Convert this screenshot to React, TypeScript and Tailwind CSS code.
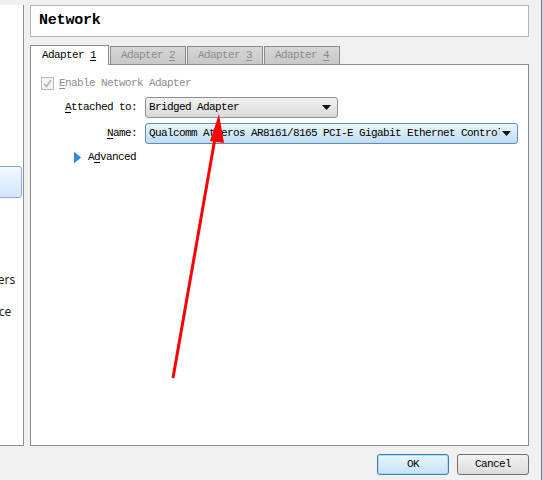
import React from "react";

const MONO = "font-['Liberation_Mono','DejaVu_Sans_Mono',monospace]";

const SIDE_ITEMS = ["General", "System", "Display", "Storage", "Audio", "Network", "Serial Ports", "USB", "Shared Folders", "User Interface"];

const TABS = ["1", "2", "3", "4"];

function Combo({ text, width, focus }: { text: string; width: string; focus?: boolean }) {
  return (
    <div
      className={`flex h-[21px] items-center rounded-[3px] border pl-[3px] pr-[6px] ${width} ${
        focus
          ? "border-[#5d8db5] bg-gradient-to-b from-[#eaf6fd] to-[#bcdcef]"
          : "border-[#8e8f8f] bg-gradient-to-b from-[#f2f2f2] to-[#d9d9d9]"
      }`}
    >
      <span className="flex-1 overflow-hidden whitespace-nowrap text-[11px] tracking-[-0.6px] text-black">{text}</span>
      <svg width="9" height="5" viewBox="0 0 9 5" className="ml-[2px] shrink-0">
        <path d="M0 0h9L4.5 5z" fill="#111" />
      </svg>
    </div>
  );
}

export default function App() {
  return (
    <div className={`relative flex h-[480px] w-[543px] overflow-hidden bg-[#f0f0f0] ${MONO}`}>
      {/* settings list, mostly scrolled off the left edge */}
      <div className="mt-[5px] h-[441px] w-[24px] shrink-0 overflow-hidden border-b border-r border-[#8e8f93] bg-white pt-[1px] font-['Noto_Sans','Open_Sans',sans-serif]">
        {SIDE_ITEMS.map((item) => (
          <div
            key={item}
            className={`flex h-[32px] items-center ${
              item === "Network"
                ? "rounded-[3px] border border-[#84acdd] bg-gradient-to-b from-[#f2f8ff] to-[#d3e6fd] -ml-[4px] mr-[1px]"
                : "pt-[4px]"
            }`}
          >
            <span className="ml-[-69px] whitespace-nowrap text-[12px] text-[#1e1e1e]">{item}</span>
          </div>
        ))}
      </div>

      <div className="ml-[6px] flex w-[499px] shrink-0 flex-col">
        <div className="mt-[5px] flex h-[32px] items-center border border-[#b4b4b4] bg-white pl-[8px]">
          <span className="text-[15px] font-bold tracking-[-0.2px] text-black">Network</span>
        </div>

        <div className="mt-[7px] flex h-[20px] items-end">
          {TABS.map((n, i) =>
            i === 0 ? (
              <div
                key={n}
                className="relative z-10 -mb-px flex h-[20px] w-[79px] items-center border border-b-0 border-[#898c95] bg-white pl-[11px] text-[11px] tracking-[-0.6px] text-black"
              >
                Adapter <span className="ml-[6px] underline underline-offset-2">{n}</span>
              </div>
            ) : (
              <div
                key={n}
                className="ml-[1px] flex h-[18px] w-[76px] items-center border border-b-0 border-[#898c95] bg-gradient-to-b from-[#d6d6d6] to-[#c8c8c8] pl-[10px] text-[11px] tracking-[-0.6px] text-[#8c8c8c]"
              >
                Adapter <span className="ml-[6px] underline underline-offset-2">{n}</span>
              </div>
            )
          )}
        </div>

        <div className="flex h-[382px] flex-col border border-[#898c95] bg-white text-[11px] leading-none tracking-[-0.6px]">
          <div className="ml-[10px] mt-[11px] flex h-[14px] items-center">
            <div className="flex h-[13px] w-[13px] items-center justify-center border border-[#b9b9b9] bg-[#f4f4f4]">
              <svg width="9" height="9" viewBox="0 0 9 9">
                <path d="M1 5l2.5 2.5L8 1" stroke="#b4b4b4" strokeWidth="1.6" fill="none" />
              </svg>
            </div>
            <span className="ml-[5px] text-[#8d8d8d]">
              <span className="underline underline-offset-2">E</span>nable Network Adapter
            </span>
          </div>

          <div className="mt-[7px] flex h-[21px] items-center">
            <span className="w-[107px] pr-[1px] text-right text-black">
              <span className="underline underline-offset-2">A</span>ttached to:
            </span>
            <div className="ml-[7px]">
              <Combo text="Bridged Adapter" width="w-[193px]" />
            </div>
          </div>

          <div className="mt-[5px] flex h-[21px] items-center">
            <span className="w-[107px] pr-[1px] text-right text-black">
              <span className="underline underline-offset-2">N</span>ame:
            </span>
            <div className="ml-[7px]">
              <Combo text="Qualcomm Atheros AR8161/8165 PCI-E Gigabit Ethernet Controller" width="w-[373px]" focus />
            </div>
          </div>

          <div className="ml-[43px] mt-[7px] flex h-[12px] items-center">
            <svg width="7" height="11" viewBox="0 0 7 11">
              <path d="M0.5 0.5L6.5 5.5L0.5 10.5z" fill="#2f8fe8" stroke="#1f6fc8" strokeWidth="0.8" />
            </svg>
            <span className="ml-[7px] text-black">
              A<span className="underline underline-offset-2">d</span>vanced
            </span>
          </div>
        </div>

        <div className="mt-[8px] flex justify-end gap-[8px] text-[11px] tracking-[-0.6px]">
          <button className="h-[21px] w-[72px] rounded-[3px] border border-[#3c7fb1] bg-gradient-to-b from-[#eaf6fd] to-[#c4e3f5] text-black shadow-[inset_0_0_0_1px_#a8dcf5]">
            OK
          </button>
          <button className="h-[21px] w-[72px] rounded-[3px] border border-[#707070] bg-gradient-to-b from-[#f2f2f2] to-[#dcdcdc] text-black">
            Cancel
          </button>
        </div>
      </div>

      {/* window frame edge at the far right */}
      <div className="ml-auto flex h-full">
        <div className="w-px bg-[#6d7a8a]" />
        <div className="w-px bg-[#c9ddf0]" />
      </div>

      {/* red annotation arrow */}
      <svg className="pointer-events-none absolute left-0 top-0" width="543" height="480">
        <line x1="173" y1="378" x2="214.5" y2="141" stroke="#ff0000" strokeWidth="3" />
        <path d="M219 114 L224 143 L210 141 Z" fill="#ff0000" />
      </svg>
    </div>
  );
}
